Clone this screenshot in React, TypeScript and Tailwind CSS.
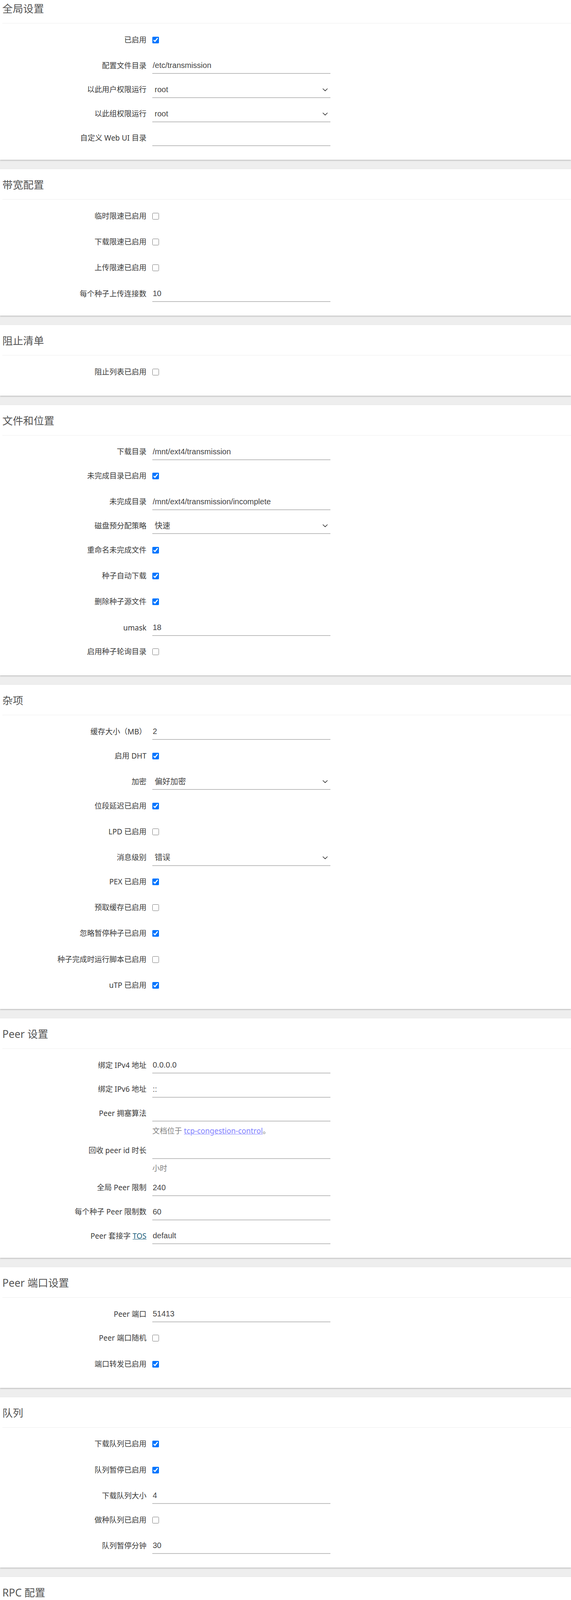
import React from "react";

type Row =
  | { k: "cb"; label: React.ReactNode; checked: boolean; help?: React.ReactNode }
  | { k: "in"; label: React.ReactNode; value: string; help?: React.ReactNode }
  | { k: "sel"; label: React.ReactNode; value: string }
  | { k: "pw"; label: React.ReactNode; value: string };

type Sec = { title: string; rows: Row[]; first?: boolean };

const cb = (label: React.ReactNode, checked: boolean, help?: React.ReactNode): Row => ({ k: "cb", label, checked, help });
const inp = (label: React.ReactNode, value: string, help?: React.ReactNode): Row => ({ k: "in", label, value, help });
const sel = (label: React.ReactNode, value: string): Row => ({ k: "sel", label, value });

const sections: Sec[] = [
  {
    title: "全局设置",
    first: true,
    rows: [
      cb("已启用", true),
      inp("配置文件目录", "/etc/transmission"),
      sel("以此用户权限运行", "root"),
      sel("以此组权限运行", "root"),
      inp("自定义 Web UI 目录", ""),
    ],
  },
  {
    title: "带宽配置",
    rows: [
      cb("临时限速已启用", false),
      cb("下载限速已启用", false),
      cb("上传限速已启用", false),
      inp("每个种子上传连接数", "10"),
    ],
  },
  { title: "阻止清单", rows: [cb("阻止列表已启用", false)] },
  {
    title: "文件和位置",
    rows: [
      inp("下载目录", "/mnt/ext4/transmission"),
      cb("未完成目录已启用", true),
      inp("未完成目录", "/mnt/ext4/transmission/incomplete"),
      sel("磁盘预分配策略", "快速"),
      cb("重命名未完成文件", true),
      cb("种子自动下载", true),
      cb("删除种子源文件", true),
      inp("umask", "18"),
      cb("启用种子轮询目录", false),
    ],
  },
  {
    title: "杂项",
    rows: [
      inp("缓存大小（MB）", "2"),
      cb("启用 DHT", true),
      sel("加密", "偏好加密"),
      cb("位段延迟已启用", true),
      cb("LPD 已启用", false),
      sel("消息级别", "错误"),
      cb("PEX 已启用", true),
      cb("预取缓存已启用", false),
      cb("忽略暂停种子已启用", true),
      cb("种子完成时运行脚本已启用", false),
      cb("uTP 已启用", true),
    ],
  },
  {
    title: "Peer 设置",
    rows: [
      inp("绑定 IPv4 地址", "0.0.0.0"),
      inp("绑定 IPv6 地址", "::"),
      inp(
        "Peer 拥塞算法",
        "",
        <>
          文档位于{" "}
          <a href="#" className="text-[#8080ff] underline">
            tcp-congestion-control
          </a>
          。
        </>
      ),
      inp("回收 peer id 时长", "", "小时"),
      inp("全局 Peer 限制", "240"),
      inp("每个种子 Peer 限制数", "60"),
      inp(
        <>
          Peer 套接字{" "}
          <a href="#" className="text-[#1b5e7b] underline">
            TOS
          </a>
        </>,
        "default"
      ),
    ],
  },
  {
    title: "Peer 端口设置",
    rows: [inp("Peer 端口", "51413"), cb("Peer 端口随机", false), cb("端口转发已启用", true)],
  },
  {
    title: "队列",
    rows: [
      cb("下载队列已启用", true),
      cb("队列暂停已启用", true),
      inp("下载队列大小", "4"),
      cb("做种队列已启用", false),
      inp("队列暂停分钟", "30"),
    ],
  },
  {
    title: "RPC 配置",
    rows: [
      cb("RPC 已启用", true),
      inp("RPC 绑定地址", "0.0.0.0"),
      inp("RPC 端口", "9091"),
      inp("RPC URL", "/transmission/"),
      cb("RPC 主机白名单已启用", false),
      cb("RPC 白名单已启用", false),
      cb("RPC 授权验证", true),
      inp("RPC 用户名", "ywang"),
      { k: "pw", label: "RPC 密码", value: "123456789" },
    ],
  },
  {
    title: "计划任务",
    rows: [
      cb(
        "计划限速已启用",
        false,
        <>
          当启用后，会开启/关闭<b className="font-bold">临时限速已启用</b>设置
        </>
      ),
      cb("空闲做种时间已启用", false),
      cb("分享率限制已启用", true),
      inp("分享率限值", "2.0000"),
    ],
  },
];

const LABEL =
  "w-[375px] shrink-0 text-right mt-[13px] leading-[39px] text-[19px] text-[#3a3a3a] whitespace-nowrap";
const INPUT =
  "block w-[456px] h-[41px] border-b-2 border-[#bdbdbd] bg-transparent pl-[1px] text-[20px] text-[#444] outline-none [font-family:'Liberation_Sans','Noto_Sans_CJK_SC',sans-serif]";
const HELP = "text-[19px] leading-[24px] text-[#808080] whitespace-nowrap";

function Chevron() {
  return (
    <svg
      className="absolute right-[7px] top-[16px] pointer-events-none"
      width="13"
      height="8"
      viewBox="0 0 13 8"
      fill="none"
    >
      <path d="M1 1.2 L6.5 6.6 L12 1.2" stroke="#333" strokeWidth="1.6" strokeLinecap="round" strokeLinejoin="round" />
    </svg>
  );
}

function FieldRow({ row }: { row: Row }) {
  let h = "h-[61.7px]";
  if (row.k === "cb") h = row.help ? "h-[99.8px]" : "h-[66.3px]";
  if (row.k === "in" && row.help) h = "h-[95.2px]";

  return (
    <div className={`flex ${h}`}>
      <div className={LABEL}>{row.label}</div>
      <div className="ml-[15px] flex flex-col">
        {row.k === "cb" && (
          <>
            <input
              type="checkbox"
              defaultChecked={row.checked}
              className="mt-[24px] w-[17px] h-[17px] m-0"
            />
            {row.help && <div className={`${HELP} mt-[28.5px]`}>{row.help}</div>}
          </>
        )}
        {row.k === "in" && (
          <>
            <input type="text" defaultValue={row.value} className={`${INPUT} mt-[12.5px]`} />
            {row.help && <div className={`${HELP} mt-[12px]`}>{row.help}</div>}
          </>
        )}
        {row.k === "sel" && (
          <div className="relative mt-[12.5px] w-[456px] h-[41px]">
            <select
              defaultValue={row.value}
              className={`${INPUT} appearance-none pl-[6px]`}
            >
              <option value={row.value}>{row.value}</option>
            </select>
            <Chevron />
          </div>
        )}
        {row.k === "pw" && (
          <div className="flex mt-[12.5px]">
            <input type="password" defaultValue={row.value} className={INPUT} />
            <button
              type="button"
              className="w-[42px] h-[41px] rounded-[4px] border border-[#c4c4c4] bg-[#d6d6d6] text-[16px] text-[#222] leading-none [font-family:'Liberation_Sans',sans-serif]"
            >
              *
            </button>
          </div>
        )}
      </div>
    </div>
  );
}

function Section({ sec }: { sec: Sec }) {
  return (
    <section className="relative z-[1] bg-white shadow-[0_2px_3px_rgba(0,0,0,0.2),0_0_1px_rgba(0,0,0,0.12)]">
      <div className="ml-[6px]">
        <h3
          className={`${sec.first ? "pt-[4px]" : "pt-[22px]"} pb-[19px] leading-[36px] text-[26.67px] font-normal text-[#555] border-b border-[#eeeeee]`}
        >
          {sec.title}
        </h3>
      </div>
      <div className="pt-[9.5px] pb-[26.8px]">
        {sec.rows.map((r, i) => (
          <FieldRow key={i} row={r} />
        ))}
      </div>
    </section>
  );
}

export default function App() {
  return (
    <div className="min-h-screen bg-[#eeeeee] [font-family:'Noto_Sans','Noto_Sans_CJK_SC',sans-serif]">
      <div className="flex flex-col gap-[24px]">
        {sections.map((s, i) => (
          <Section key={i} sec={s} />
        ))}
      </div>
    </div>
  );
}
